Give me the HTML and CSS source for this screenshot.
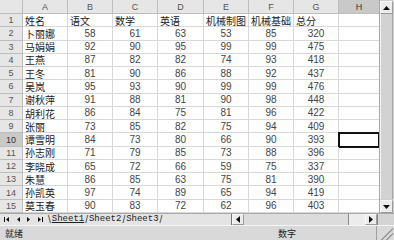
FILE: index.html
```html
<!DOCTYPE html>
<html lang="zh-CN">
<head>
    <meta charset="UTF-8">
    <title>成绩表</title>
    <link rel="stylesheet" href="styles.css">
</head>
<body>
    <div class="window">
        <div class="top">
            <div class="sheet">
                <!-- column headers -->
                <div class="h corner"></div>
                <div class="h">A</div>
                <div class="h">B</div>
                <div class="h">C</div>
                <div class="h">D</div>
                <div class="h">E</div>
                <div class="h">F</div>
                <div class="h">G</div>
                <div class="h on last">H</div>

                <div class="h">1</div><div class="c">姓名</div><div class="c">语文</div><div class="c">数学</div><div class="c">英语</div><div class="c">机械制图</div><div class="c">机械基础</div><div class="c">总分</div><div class="c last"></div>
                <div class="h">2</div><div class="c">卜丽娜</div><div class="c n">58</div><div class="c n">61</div><div class="c n">63</div><div class="c n">53</div><div class="c n">85</div><div class="c n">320</div><div class="c last"></div>
                <div class="h">3</div><div class="c">马娟娟</div><div class="c n">92</div><div class="c n">90</div><div class="c n">95</div><div class="c n">99</div><div class="c n">99</div><div class="c n">475</div><div class="c last"></div>
                <div class="h">4</div><div class="c">王燕</div><div class="c n">87</div><div class="c n">82</div><div class="c n">82</div><div class="c n">74</div><div class="c n">93</div><div class="c n">418</div><div class="c last"></div>
                <div class="h">5</div><div class="c">王冬</div><div class="c n">81</div><div class="c n">90</div><div class="c n">86</div><div class="c n">88</div><div class="c n">92</div><div class="c n">437</div><div class="c last"></div>
                <div class="h">6</div><div class="c">吴岚</div><div class="c n">95</div><div class="c n">93</div><div class="c n">90</div><div class="c n">99</div><div class="c n">99</div><div class="c n">476</div><div class="c last"></div>
                <div class="h">7</div><div class="c">谢秋萍</div><div class="c n">91</div><div class="c n">88</div><div class="c n">81</div><div class="c n">90</div><div class="c n">98</div><div class="c n">448</div><div class="c last"></div>
                <div class="h">8</div><div class="c">胡利花</div><div class="c n">86</div><div class="c n">84</div><div class="c n">75</div><div class="c n">81</div><div class="c n">96</div><div class="c n">422</div><div class="c last"></div>
                <div class="h">9</div><div class="c">张丽</div><div class="c n">73</div><div class="c n">85</div><div class="c n">82</div><div class="c n">75</div><div class="c n">94</div><div class="c n">409</div><div class="c last"></div>
                <div class="h on">10</div><div class="c">谭雪明</div><div class="c n">84</div><div class="c n">73</div><div class="c n">80</div><div class="c n">66</div><div class="c n">90</div><div class="c n">393</div><div class="c last active"></div>
                <div class="h">11</div><div class="c">孙志刚</div><div class="c n">71</div><div class="c n">79</div><div class="c n">85</div><div class="c n">73</div><div class="c n">88</div><div class="c n">396</div><div class="c last"></div>
                <div class="h">12</div><div class="c">李晓成</div><div class="c n">65</div><div class="c n">72</div><div class="c n">66</div><div class="c n">59</div><div class="c n">75</div><div class="c n">337</div><div class="c last"></div>
                <div class="h">13</div><div class="c">朱慧</div><div class="c n">86</div><div class="c n">85</div><div class="c n">63</div><div class="c n">75</div><div class="c n">81</div><div class="c n">390</div><div class="c last"></div>
                <div class="h">14</div><div class="c">孙凯英</div><div class="c n">97</div><div class="c n">74</div><div class="c n">89</div><div class="c n">65</div><div class="c n">94</div><div class="c n">419</div><div class="c last"></div>
                <div class="h">15</div><div class="c">莫玉春</div><div class="c n">90</div><div class="c n">83</div><div class="c n">72</div><div class="c n">62</div><div class="c n">96</div><div class="c n">403</div><div class="c last"></div>
            </div>

            <div class="vscroll">
                <div class="btn">
                    <svg width="7" height="4" viewBox="0 0 7 4"><polygon points="3.5,0 7,4 0,4" fill="#111"/></svg>
                </div>
                <div class="thumb"></div>
                <div class="btn">
                    <svg width="7" height="4" viewBox="0 0 7 4"><polygon points="0,0 7,0 3.5,4" fill="#111"/></svg>
                </div>
            </div>
        </div>

        <div class="tabbar">
            <div class="nav">
                <svg width="6" height="5" viewBox="0 0 6 5"><rect x="0" y="0" width="1" height="5" fill="#111"/><polygon points="5,0 5,5 2,2.5" fill="#111"/></svg>
                <svg width="6" height="5" viewBox="0 0 6 5"><polygon points="5,0 5,5 2,2.5" fill="#111"/></svg>
                <svg width="6" height="5" viewBox="0 0 6 5"><polygon points="1,0 1,5 4,2.5" fill="#111"/></svg>
                <svg width="6" height="5" viewBox="0 0 6 5"><polygon points="1,0 1,5 4,2.5" fill="#111"/><rect x="5" y="0" width="1" height="5" fill="#111"/></svg>
            </div>
            <div class="tabs">
                <span class="edge">\</span>
                <span class="tab current">Sheet1</span>
                <span class="edge">/</span>
                <span class="tab">Sheet2</span>
                <span class="edge">/</span>
                <span class="tab">Sheet3</span>
                <span class="edge">/</span>
            </div>
            <div class="hscroll">
                <div class="btn">
                    <svg width="4" height="7" viewBox="0 0 4 7"><polygon points="4,0 4,7 0,3.5" fill="#111"/></svg>
                </div>
                <div class="hthumb"></div>
                <div class="track"></div>
                <div class="btn">
                    <svg width="4" height="7" viewBox="0 0 4 7"><polygon points="0,0 0,7 4,3.5" fill="#111"/></svg>
                </div>
            </div>
            <div class="box"></div>
        </div>

        <div class="status">
            <span class="ready">就绪</span>
            <span class="mode">数字</span>
            <span class="grip"></span>
        </div>
    </div>
</body>
</html>
```

FILE: styles.css
```css
body {
    margin: 0;
    background-color: #ffffff;
}

.window {
    width: 394px;
    height: 240px;
    display: flex;
    flex-direction: column;
    overflow: hidden;
    font-family: "Liberation Sans", "Noto Sans CJK SC", sans-serif;
}

.top {
    display: flex;
    height: 213px;
}

/* grid of cells */
.sheet {
    width: 379px;
    height: 213px;
    display: grid;
    grid-template-columns: 23px 45px 45px 45px 46px 45px 45px 45px 40px;
    grid-template-rows: 14px repeat(15, 1fr);
    background-color: #ffffff;
}

.c {
    box-sizing: border-box;
    border-right: 1px solid #d8d8d8;
    border-bottom: 1px solid #d8d8d8;
    display: flex;
    align-items: center;
    padding: 0 2px;
    font-size: 10px;
    color: #222;
    white-space: nowrap;
    overflow: hidden;
}

.n {
    justify-content: center;
    color: #444;
}

.h {
    box-sizing: border-box;
    background-color: #e6e6e6;
    border-right: 1px solid #bdbdbd;
    border-bottom: 1px solid #bdbdbd;
    display: flex;
    align-items: center;
    justify-content: center;
    font-size: 9px;
    color: #555;
}

.h.on {
    background-color: #c9c9c9;
    color: #333;
}

.last {
    border-right: none;
}

.active {
    outline: 2px solid #111;
    outline-offset: -1px;
}

/* vertical scroll bar */
.vscroll {
    width: 15px;
    display: flex;
    flex-direction: column;
    background-color: #cfcfcf;
    border-left: 1px solid #a8a8a8;
    box-sizing: border-box;
}

.btn {
    box-sizing: border-box;
    width: 13px;
    height: 13px;
    display: flex;
    align-items: center;
    justify-content: center;
    background-color: #ececec;
    border: 1px solid #9a9a9a;
    border-top-color: #fafafa;
    border-left-color: #fafafa;
}

.vscroll .btn {
    margin: 1px 0 0 0;
}

.thumb {
    flex: 1;
    width: 13px;
    box-sizing: border-box;
    background-color: #d2d2d2;
    border-left: 1px solid #f2f2f2;
    border-right: 1px solid #a6a6a6;
}

/* sheet tabs and horizontal scroll */
.tabbar {
    height: 12px;
    display: flex;
    align-items: stretch;
    background-color: #e4e4e4;
    border-top: 1px solid #a8a8a8;
    box-sizing: border-box;
}

.nav {
    width: 47px;
    display: flex;
    align-items: center;
    justify-content: space-around;
    padding: 0 2px;
    box-sizing: border-box;
}

.tabs {
    width: 184px;
    display: flex;
    align-items: center;
    font-family: "Liberation Mono", monospace;
    font-size: 9px;
    color: #222;
    line-height: 11px;
}

.edge {
    color: #333;
    padding: 0 1px;
    font-family: "Liberation Sans", sans-serif;
    font-size: 10px;
}

.tab.current {
    text-decoration: underline;
}

.hscroll {
    width: 146px;
    display: flex;
    border-left: 1px solid #777;
    box-sizing: border-box;
}

.hscroll .btn {
    height: 11px;
    width: 12px;
}

.hthumb {
    width: 105px;
    box-sizing: border-box;
    background-color: #dcdcdc;
    border-right: 1px solid #8a8a8a;
}

.track {
    flex: 1;
    background-color: #ececec;
}

.box {
    flex: 1;
    background-color: #d4d4d4;
    border-left: 1px solid #888;
}

/* status bar */
.status {
    height: 15px;
    display: flex;
    align-items: center;
    background-color: #d9d9d9;
    border-top: 1px solid #f4f4f4;
    box-sizing: border-box;
    font-size: 9px;
    color: #222;
    font-family: "Noto Sans CJK SC", sans-serif;
}

.ready {
    margin-left: 5px;
    width: 273px;
}

.mode {
    width: 98px;
}

.grip {
    width: 16px;
    height: 100%;
    border-left: 1px solid #a0a0a0;
    background: linear-gradient(135deg, transparent 60%, #9a9a9a 60%, #9a9a9a 66%, transparent 66%, transparent 76%, #9a9a9a 76%, #9a9a9a 82%, transparent 82%);
}
```
